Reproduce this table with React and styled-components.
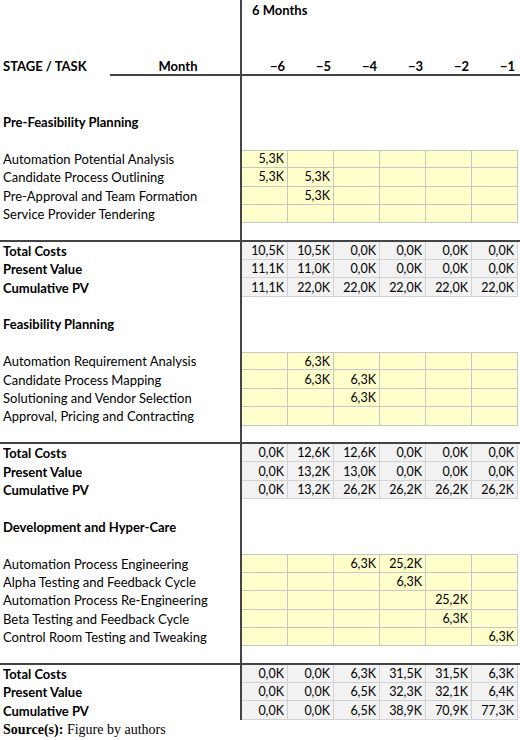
import React from "react";
import styled, { createGlobalStyle } from "styled-components";

const Global = createGlobalStyle`
  html, body { margin: 0; padding: 0; background: #fff; }
  body { font-family: Lato, "Open Sans", sans-serif; color: #000; }
`;

const ROW_H = 18.4;

const Sheet = styled.div`
  width: 520px;
  display: flex;
  flex-direction: column;
  font-size: 13px;
`;

const Row = styled.div`
  display: grid;
  grid-template-columns: 110px 130px 2px repeat(6, 46px) 2px;
  height: ${(p) => p.$h ?? ROW_H}px;
  align-items: stretch;
`;

const Divider = styled.div`
  background: #444;
  grid-column: 3;
`;

const Label = styled.div`
  grid-column: ${(p) => p.$span ?? "1 / 3"};
  display: flex;
  align-items: center;
  padding-left: 3px;
  font-weight: ${(p) => (p.$bold ? 700 : 400)};
  white-space: nowrap;
`;

const MonthHead = styled.div`
  grid-column: 2;
  display: flex;
  align-items: center;
  justify-content: center;
  font-weight: 700;
  padding-left: 6px;
`;

const Span = styled.div`
  grid-column: 4 / 10;
  display: flex;
  align-items: center;
  padding-left: 10px;
  font-weight: 700;
`;

const HeadNum = styled.div`
  display: flex;
  align-items: center;
  justify-content: flex-end;
  padding-right: 3px;
  font-weight: 700;
`;

const Cell = styled.div`
  box-sizing: border-box;
  display: flex;
  align-items: center;
  justify-content: flex-end;
  padding-right: 3px;
  font-size: 12.5px;
  color: #000;
  background: ${(p) => (p.$kind === "sum" ? "#f2f2f2" : "#ffffcc")};
  border-right: 1px solid ${(p) => (p.$kind === "sum" ? "#d2d2d2" : "#c6c6c6")};
  border-bottom: 1px solid ${(p) => (p.$kind === "sum" ? "#d2d2d2" : "#c6c6c6")};
  border-top: ${(p) =>
    p.$first ? `1px solid ${p.$kind === "sum" ? "#d2d2d2" : "#c6c6c6"}` : "none"};
`;

const Rule = styled.div`
  height: 2px;
  background: #444;
  margin-left: ${(p) => p.$indent ?? 0}px;
`;

const Source = styled.div`
  font-family: "Liberation Serif", "Times New Roman", serif;
  font-size: 14px;
  padding: 2px 0 0 3px;
  b { font-weight: 700; }
`;

const sections = [
  {
    title: "Pre-Feasibility Planning",
    tasks: [
      ["Automation Potential Analysis", ["5,3K", "", "", "", "", ""]],
      ["Candidate Process Outlining", ["5,3K", "5,3K", "", "", "", ""]],
      ["Pre-Approval and Team Formation", ["", "5,3K", "", "", "", ""]],
      ["Service Provider Tendering", ["", "", "", "", "", ""]],
    ],
    sums: [
      ["Total Costs", ["10,5K", "10,5K", "0,0K", "0,0K", "0,0K", "0,0K"]],
      ["Present Value", ["11,1K", "11,0K", "0,0K", "0,0K", "0,0K", "0,0K"]],
      ["Cumulative PV", ["11,1K", "22,0K", "22,0K", "22,0K", "22,0K", "22,0K"]],
    ],
  },
  {
    title: "Feasibility Planning",
    tasks: [
      ["Automation Requirement Analysis", ["", "6,3K", "", "", "", ""]],
      ["Candidate Process Mapping", ["", "6,3K", "6,3K", "", "", ""]],
      ["Solutioning and Vendor Selection", ["", "", "6,3K", "", "", ""]],
      ["Approval, Pricing and Contracting", ["", "", "", "", "", ""]],
    ],
    sums: [
      ["Total Costs", ["0,0K", "12,6K", "12,6K", "0,0K", "0,0K", "0,0K"]],
      ["Present Value", ["0,0K", "13,2K", "13,0K", "0,0K", "0,0K", "0,0K"]],
      ["Cumulative PV", ["0,0K", "13,2K", "26,2K", "26,2K", "26,2K", "26,2K"]],
    ],
  },
  {
    title: "Development and Hyper-Care",
    tasks: [
      ["Automation Process Engineering", ["", "", "6,3K", "25,2K", "", ""]],
      ["Alpha Testing and Feedback Cycle", ["", "", "", "6,3K", "", ""]],
      ["Automation Process Re-Engineering", ["", "", "", "", "25,2K", ""]],
      ["Beta Testing and Feedback Cycle", ["", "", "", "", "6,3K", ""]],
      ["Control Room Testing and Tweaking", ["", "", "", "", "", "6,3K"]],
    ],
    sums: [
      ["Total Costs", ["0,0K", "0,0K", "6,3K", "31,5K", "31,5K", "6,3K"]],
      ["Present Value", ["0,0K", "0,0K", "6,5K", "32,3K", "32,1K", "6,4K"]],
      ["Cumulative PV", ["0,0K", "0,0K", "6,5K", "38,9K", "70,9K", "77,3K"]],
    ],
  },
];

const Blank = ({ h }) => (
  <Row $h={h}>
    <Divider />
  </Row>
);

const DataRow = ({ label, values, kind, first, bold }) => (
  <Row>
    <Label $bold={bold}>{label}</Label>
    <Divider />
    {values.map((v, i) => (
      <Cell key={i} $kind={kind} $first={first}>
        {v}
      </Cell>
    ))}
  </Row>
);

const Section = ({ s, first }) => (
  <>
    {!first && <Blank />}
    <Row>
      <Label $bold>{s.title}</Label>
      <Divider />
    </Row>
    <Blank />
    {s.tasks.map(([l, v], i) => (
      <DataRow key={l} label={l} values={v} kind="task" first={i === 0} />
    ))}
    <Blank h={ROW_H - 2} />
    <Rule />
    {s.sums.map(([l, v]) => (
      <DataRow key={l} label={l} values={v} kind="sum" bold first={false} />
    ))}
  </>
);

export default function App() {
  return (
    <>
      <Global />
      <Sheet>
        <Row $h={20.4}>
          <Divider />
          <Span>6 Months</Span>
        </Row>
        <Blank />
        <Blank />
        <Row $h={17}>
          <Label $bold $span="1">STAGE / TASK</Label>
          <MonthHead>Month</MonthHead>
          <Divider />
          {["−6", "−5", "−4", "−3", "−2", "−1"].map((m) => (
            <HeadNum key={m}>{m}</HeadNum>
          ))}
        </Row>
        <Rule $indent={110} />
        <Blank />
        <Blank />
        {sections.map((s, i) => (
          <Section key={s.title} s={s} first={i === 0} />
        ))}
        <Source>
          <b>Source(s):</b> Figure by authors
        </Source>
      </Sheet>
    </>
  );
}
